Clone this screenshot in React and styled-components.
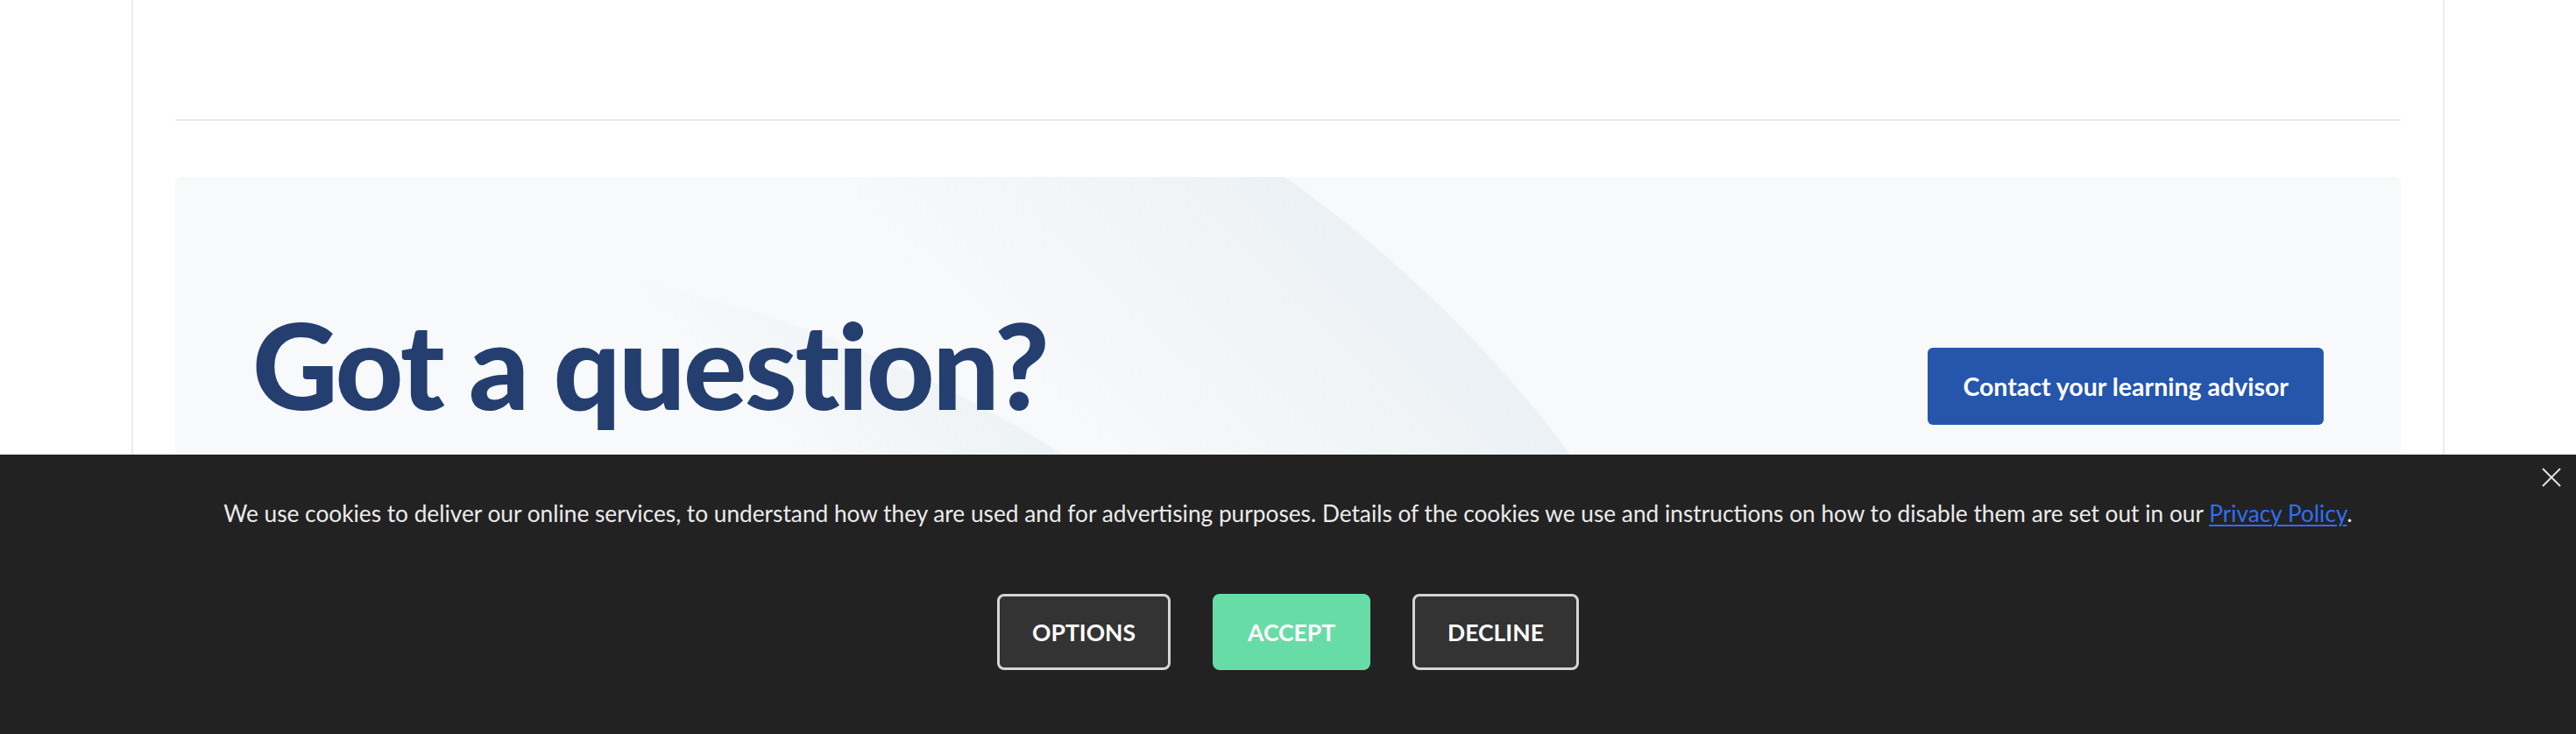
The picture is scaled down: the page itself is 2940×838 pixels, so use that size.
import React from "react";
import styled, { createGlobalStyle } from "styled-components";

const GlobalStyle = createGlobalStyle`
  html, body {
    margin: 0;
    padding: 0;
    height: 838px;
    overflow: hidden;
    background: #ffffff;
    font-family: Lato, "Noto Sans", sans-serif;
  }
  * { box-sizing: border-box; }
`;

const Page = styled.div`
  width: 2640px;
  height: 838px;
  margin: 0 auto;
  overflow: hidden;
  border-left: 2px solid #ebebeb;
  border-right: 2px solid #ebebeb;
  padding: 136px 48px 0;
  background: #fff;
`;

const Divider = styled.hr`
  margin: 0 0 64px;
  border: 0;
  height: 2px;
  background: #e8e9eb;
`;

const Card = styled.section`
  position: relative;
  overflow: hidden;
  border-radius: 6px;
  background: #f7f9fa;
  height: 636px;
  padding: 133px 88px 0;
  display: flex;
  justify-content: space-between;
  align-items: flex-start;
`;

const Decoration = styled.svg`
  position: absolute;
  inset: 0;
  width: 100%;
  height: 100%;
  pointer-events: none;
`;

const Heading = styled.h2`
  position: relative;
  margin: 0;
  font-family: Lato, sans-serif;
  font-weight: 900;
  font-size: 135px;
  line-height: 1.2;
  color: #243f6f;
  letter-spacing: -2.4px;
  font-variant-ligatures: none;
  font-feature-settings: "liga" 0, "dlig" 0;
`;

const PrimaryButton = styled.button`
  position: relative;
  margin-top: 62px;
  height: 88px;
  padding: 0 40px;
  border: 0;
  border-radius: 6px;
  background: #2556ac;
  color: #ffffff;
  font-family: Lato, sans-serif;
  font-weight: 700;
  font-size: 28.5px;
  cursor: pointer;
`;

const Banner = styled.aside`
  position: fixed;
  left: 0;
  right: 0;
  bottom: 0;
  height: 319px;
  background: #222222;
  padding-top: 48px;
  display: flex;
  flex-direction: column;
  align-items: center;
`;

const BannerText = styled.p`
  margin: 0;
  font-family: Lato, sans-serif;
  font-size: 26.25px;
  line-height: 1.5;
  color: #ebebeb;
  text-align: center;
`;

const PolicyLink = styled.a`
  color: #2f6ff0;
  text-decoration: underline;
  text-underline-offset: 3px;
  text-decoration-thickness: 2px;
`;

const ButtonRow = styled.div`
  margin-top: 72px;
  display: flex;
  gap: 48px;
`;

const CookieButton = styled.button`
  height: 87px;
  padding: 0 37px;
  border: 3px solid ${(p) => (p.$accent ? "#68dca6" : "#d4d4d4")};
  border-radius: 8px;
  background: ${(p) => (p.$accent ? "#68dca6" : "#333333")};
  color: #ffffff;
  font-family: Lato, sans-serif;
  font-weight: 700;
  font-size: 26.5px;
  text-transform: uppercase;
  cursor: pointer;
`;

const CloseButton = styled.button`
  position: absolute;
  top: 15px;
  right: 17px;
  width: 22px;
  height: 22px;
  padding: 0;
  border: 0;
  background: transparent;
  cursor: pointer;
  display: flex;
`;

export default function App() {
  return (
    <>
      <GlobalStyle />
      <Page>
        <Divider />
        <Card>
          <Decoration viewBox="0 0 2540 636" preserveAspectRatio="none">
            <defs>
              <linearGradient id="outerG" gradientUnits="userSpaceOnUse" x1="738" y1="0" x2="1002" y2="-264">
                <stop offset="0" stopColor="#edf2f5" stopOpacity="0" />
                <stop offset="0.55" stopColor="#edf2f5" stopOpacity="0.55" />
                <stop offset="1" stopColor="#ecf1f5" stopOpacity="1" />
              </linearGradient>
              <linearGradient id="innerG" gradientUnits="userSpaceOnUse" x1="400" y1="0" x2="550" y2="-150">
                <stop offset="0" stopColor="#edf2f5" stopOpacity="0" />
                <stop offset="0.6" stopColor="#edf2f5" stopOpacity="0.6" />
                <stop offset="1" stopColor="#edf2f5" stopOpacity="1" />
              </linearGradient>
            </defs>
            <circle cx="428" cy="1188" r="1454" fill="url(#outerG)" />
            <circle cx="233" cy="1544" r="1454" fill="#f7f9fa" />
            <circle cx="233" cy="1544" r="1454" fill="url(#innerG)" />
          </Decoration>
          <Heading>Got a question?</Heading>
          <PrimaryButton>Contact your learning advisor</PrimaryButton>
        </Card>
      </Page>
      <Banner>
        <CloseButton aria-label="Close">
          <svg width="22" height="22" viewBox="0 0 22 22">
            <path d="M1 1 L21 21 M21 1 L1 21" stroke="#e0e0e0" strokeWidth="2" fill="none" />
          </svg>
        </CloseButton>
        <BannerText>
          We use cookies to deliver our online services, to understand how they are used and for advertising purposes. Details of the cookies we use and instructions on how to disable them are set out in our{" "}
          <PolicyLink href="#">Privacy Policy</PolicyLink>.
        </BannerText>
        <ButtonRow>
          <CookieButton>Options</CookieButton>
          <CookieButton $accent>Accept</CookieButton>
          <CookieButton>Decline</CookieButton>
        </ButtonRow>
      </Banner>
    </>
  );
}
